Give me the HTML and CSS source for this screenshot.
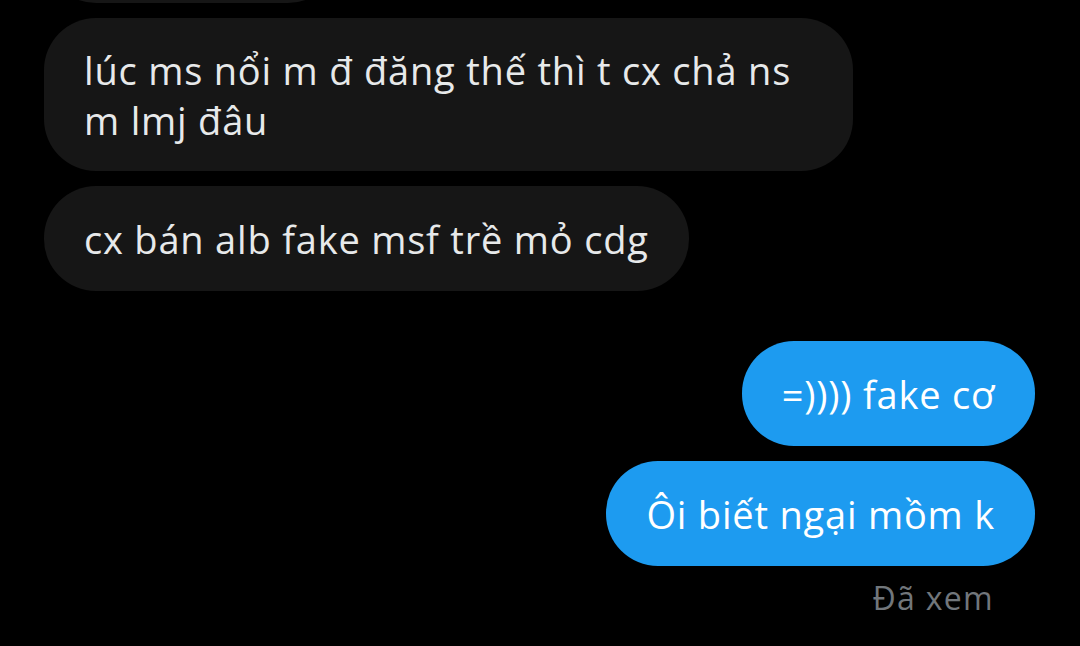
FILE: index.html
```html
<!DOCTYPE html>
<html lang="vi">
<head>
<meta charset="utf-8">
<link rel="stylesheet" href="styles.css">
</head>
<body>
<main class="chat">
  <div class="row in"><div class="bubble dark cut"></div></div>
  <div class="row in"><div class="bubble dark wrap">lúc ms nổi m đ đăng thế thì t cx chả ns m lmj đâu</div></div>
  <div class="row in"><div class="bubble dark">cx bán alb fake msf trề mỏ cdg</div></div>
  <div class="row out first"><div class="bubble blue">=)))) fake cơ</div></div>
  <div class="row out"><div class="bubble blue">Ôi biết ngại mồm k</div></div>
  <div class="seen">Đã xem</div>
</main>
</body>
</html>
```
FILE: styles.css
```css
html, body {
  margin: 0;
  padding: 0;
  background: #000;
}
body {
  width: 1080px;
  height: 646px;
  overflow: hidden;
  font-family: "Open Sans", "Noto Sans", sans-serif;
}
.chat {
  display: flex;
  flex-direction: column;
  gap: 15px;
  padding: 0 45px 0 44px;
}
.row {
  display: flex;
}
.row.in { justify-content: flex-start; }
.row.out { justify-content: flex-end; }
.row.first { margin-top: 35px; }
.bubble {
  font-size: 38px;
  letter-spacing: 0.8px;
  line-height: 50px;
  padding: 28px 40px 27px;
  border-radius: 52px;
  white-space: nowrap;
}
.bubble.dark {
  background: #161616;
  color: #e7e9ea;
}
.bubble.wrap {
  white-space: normal;
  width: 729px;
  padding-top: 27px;
  padding-bottom: 26px;
}
.bubble.cut {
  width: 216px;
  height: 50px;
  margin-top: -102px;
}
.bubble.blue {
  background: #1d9bf0;
  color: #fff;
}
.bubble.blue.wide {
  padding-left: 46px;
}
.seen {
  align-self: flex-end;
  margin-right: 41px;
  margin-top: -3px;
  font-size: 32px;
  letter-spacing: 1.3px;
  line-height: 40px;
  color: #71767b;
}
```
